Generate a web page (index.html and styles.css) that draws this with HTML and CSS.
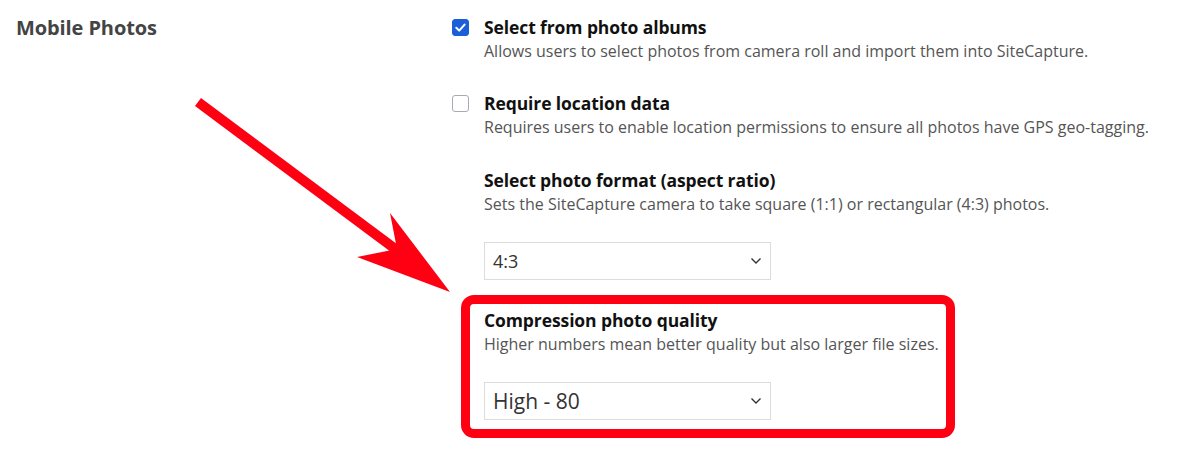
FILE: index.html
```html
<!DOCTYPE html>
<html lang="en">
<head>
<meta charset="utf-8">
<title>Mobile Photos</title>
<link rel="stylesheet" href="styles.css">
</head>
<body>
<div class="page">
  <div class="section">
    <h2 class="section-title">Mobile Photos</h2>
    <div class="options">
      <div class="option">
        <span class="check checked">
          <svg viewBox="0 0 17 17" width="17" height="17"><path d="M4.3 8.8 L7.2 11.6 L12.6 5.6" fill="none" stroke="#fff" stroke-width="2" stroke-linecap="round" stroke-linejoin="round"/></svg>
        </span>
        <div class="option-text">
          <div class="label">Select from photo albums</div>
          <div class="desc">Allows users to select photos from camera roll and import them into SiteCapture.</div>
        </div>
      </div>
      <div class="option">
        <span class="check"></span>
        <div class="option-text">
          <div class="label">Require location data</div>
          <div class="desc">Requires users to enable location permissions to ensure all photos have GPS geo-tagging.</div>
        </div>
      </div>
      <div class="option indent">
        <div class="option-text">
          <div class="label">Select photo format (aspect ratio)</div>
          <div class="desc">Sets the SiteCapture camera to take square (1:1) or rectangular (4:3) photos.</div>
          <div class="select small">
            <span>4:3</span>
            <svg viewBox="0 0 12 8" width="12" height="8"><path d="M1.5 1.5 L6 6 L10.5 1.5" fill="none" stroke="#333" stroke-width="1.4"/></svg>
          </div>
        </div>
      </div>
      <div class="option indent">
        <div class="option-text">
          <div class="label">Compression photo quality</div>
          <div class="desc">Higher numbers mean better quality but also larger file sizes.</div>
          <div class="select large">
            <span>High - 80</span>
            <svg viewBox="0 0 12 8" width="12" height="8"><path d="M1.5 1.5 L6 6 L10.5 1.5" fill="none" stroke="#333" stroke-width="1.4"/></svg>
          </div>
        </div>
      </div>
    </div>
  </div>
  <div class="highlight-box"></div>
  <svg class="arrow" viewBox="0 0 1179 469" width="1179" height="469">
    <line x1="198" y1="102" x2="402" y2="254" stroke="#ff0013" stroke-width="10"/>
    <polygon points="450,292 390,213 397,249 357,257" fill="#ff0013"/>
  </svg>
</div>
</body>
</html>
```
FILE: styles.css
```css
html, body {
  margin: 0;
  padding: 0;
  background: #fff;
}
.page {
  position: relative;
  width: 1179px;
  height: 469px;
  overflow: hidden;
  font-family: "Open Sans", "Noto Sans", sans-serif;
  color: #111;
}
.section {
  display: flex;
  padding-top: 15px;
}
.section-title {
  width: 436px;
  margin: 0;
  padding-left: 16px;
  font-size: 20px;
  line-height: 26px;
  font-weight: 700;
  color: #444;
  letter-spacing: -0.1px;
}
.options {
  display: flex;
  flex-direction: column;
  gap: 27px;
}
.option {
  display: flex;
  gap: 15px;
  align-items: flex-start;
}
.option.indent {
  padding-left: 32px;
}
.option + .option.indent {
  margin-top: 1px;
}
.check {
  width: 17px;
  height: 17px;
  box-sizing: border-box;
  border: 1.5px solid #a9a9b6;
  border-radius: 3px;
  margin-top: 4px;
  flex: none;
  display: flex;
}
.check.checked {
  background: #1a5fd8;
  border-color: #1a5fd8;
}
.check.checked svg {
  margin: -1.5px;
}
.label {
  font-size: 17.5px;
  font-weight: 700;
  line-height: 24px;
  color: #111;
  letter-spacing: -0.1px;
}
.desc {
  font-size: 16px;
  line-height: 25px;
  color: #555;
}
.select {
  margin-top: 25px;
  width: 287px;
  height: 38px;
  box-sizing: border-box;
  border: 1px solid #dcdcdc;
  display: flex;
  align-items: center;
  justify-content: space-between;
  padding: 0 8px 0 8px;
  color: #333;
}
.select.small span {
  font-size: 18px;
}
.select.large span {
  font-size: 21px;
}
.highlight-box {
  position: absolute;
  left: 461px;
  top: 295px;
  width: 494px;
  height: 143px;
  box-sizing: border-box;
  border: 9px solid #ff0013;
  border-radius: 13px;
}
.arrow {
  position: absolute;
  left: 0;
  top: 0;
  pointer-events: none;
}
```
